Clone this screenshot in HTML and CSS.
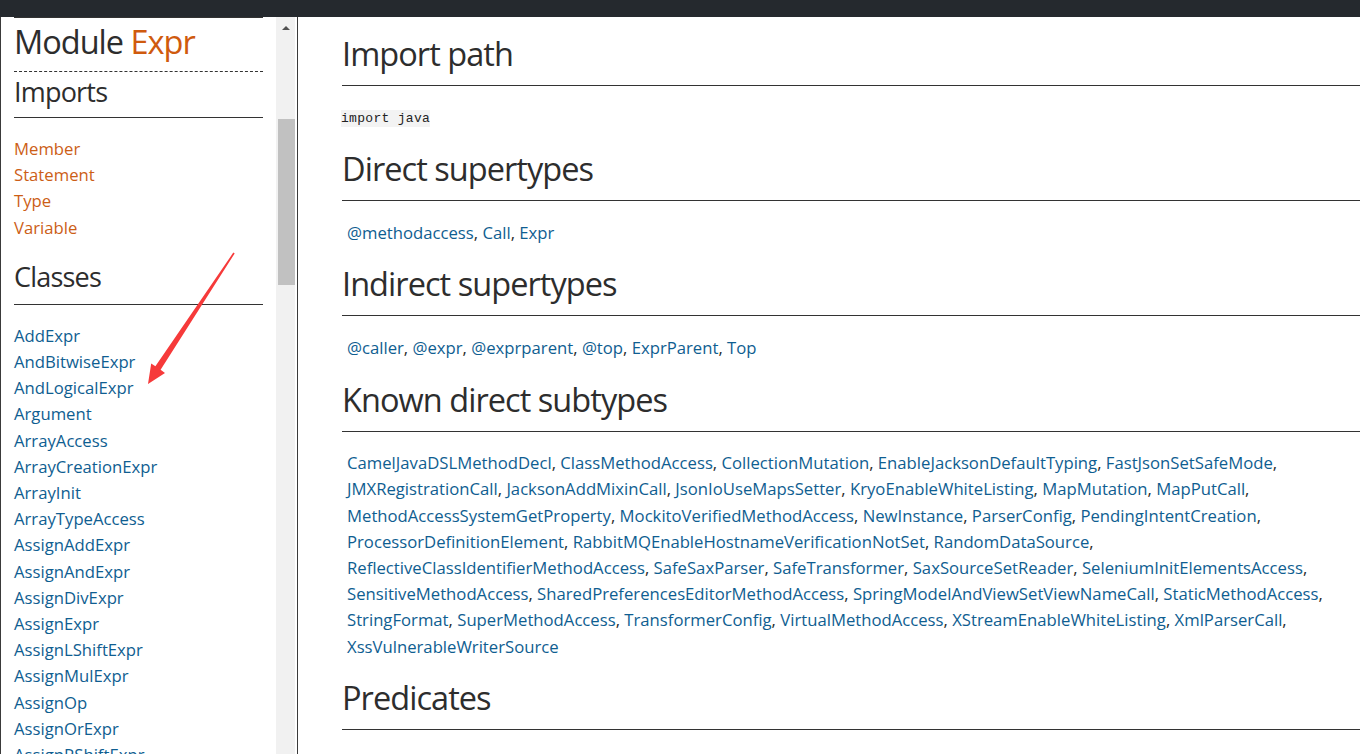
FILE: index.html
```html
<!DOCTYPE html>
<html lang="en">
<head>
<meta charset="utf-8">
<title>Module Expr</title>
<link rel="stylesheet" href="styles.css">
</head>
<body>
<div class="topbar"></div>
<div class="layout">
  <aside class="sidebar">
    <div class="side-content">
      <h1 class="side-title">Module <span class="accent">Expr</span></h1>
      <h2 class="side-h">Imports</h2>
      <ul class="side-list imports">
        <li><a href="#">Member</a></li>
        <li><a href="#">Statement</a></li>
        <li><a href="#">Type</a></li>
        <li><a href="#">Variable</a></li>
      </ul>
      <h2 class="side-h classes-h">Classes</h2>
      <ul class="side-list classes">
        <li><a href="#">AddExpr</a></li>
        <li><a href="#">AndBitwiseExpr</a></li>
        <li><a href="#">AndLogicalExpr</a></li>
        <li><a href="#">Argument</a></li>
        <li><a href="#">ArrayAccess</a></li>
        <li><a href="#">ArrayCreationExpr</a></li>
        <li><a href="#">ArrayInit</a></li>
        <li><a href="#">ArrayTypeAccess</a></li>
        <li><a href="#">AssignAddExpr</a></li>
        <li><a href="#">AssignAndExpr</a></li>
        <li><a href="#">AssignDivExpr</a></li>
        <li><a href="#">AssignExpr</a></li>
        <li><a href="#">AssignLShiftExpr</a></li>
        <li><a href="#">AssignMulExpr</a></li>
        <li><a href="#">AssignOp</a></li>
        <li><a href="#">AssignOrExpr</a></li>
        <li><a href="#">AssignRShiftExpr</a></li>
        <li><a href="#">AssignRemExpr</a></li>
      </ul>
    </div>
    <div class="scrollbar">
      <div class="scroll-up"></div>
      <div class="scroll-track"><div class="scroll-thumb"></div></div>
    </div>
  </aside>
  <main class="main">
    <h2 class="sec-h">Import path</h2>
    <p class="code-line"><code>import java</code></p>
    <h2 class="sec-h">Direct supertypes</h2>
    <p class="links"><a href="#">@methodaccess</a>, <a href="#">Call</a>, <a href="#">Expr</a></p>
    <h2 class="sec-h">Indirect supertypes</h2>
    <p class="links"><a href="#">@caller</a>, <a href="#">@expr</a>, <a href="#">@exprparent</a>, <a href="#">@top</a>, <a href="#">ExprParent</a>, <a href="#">Top</a></p>
    <h2 class="sec-h">Known direct subtypes</h2>
    <p class="links"><a href="#">CamelJavaDSLMethodDecl</a>, <a href="#">ClassMethodAccess</a>, <a href="#">CollectionMutation</a>, <a href="#">EnableJacksonDefaultTyping</a>, <a href="#">FastJsonSetSafeMode</a>,<br><a href="#">JMXRegistrationCall</a>, <a href="#">JacksonAddMixinCall</a>, <a href="#">JsonIoUseMapsSetter</a>, <a href="#">KryoEnableWhiteListing</a>, <a href="#">MapMutation</a>, <a href="#">MapPutCall</a>,<br><a href="#">MethodAccessSystemGetProperty</a>, <a href="#">MockitoVerifiedMethodAccess</a>, <a href="#">NewInstance</a>, <a href="#">ParserConfig</a>, <a href="#">PendingIntentCreation</a>,<br><a href="#">ProcessorDefinitionElement</a>, <a href="#">RabbitMQEnableHostnameVerificationNotSet</a>, <a href="#">RandomDataSource</a>,<br><a href="#">ReflectiveClassIdentifierMethodAccess</a>, <a href="#">SafeSaxParser</a>, <a href="#">SafeTransformer</a>, <a href="#">SaxSourceSetReader</a>, <a href="#">SeleniumInitElementsAccess</a>,<br><a href="#">SensitiveMethodAccess</a>, <a href="#">SharedPreferencesEditorMethodAccess</a>, <a href="#">SpringModelAndViewSetViewNameCall</a>, <a href="#">StaticMethodAccess</a>,<br><a href="#">StringFormat</a>, <a href="#">SuperMethodAccess</a>, <a href="#">TransformerConfig</a>, <a href="#">VirtualMethodAccess</a>, <a href="#">XStreamEnableWhiteListing</a>, <a href="#">XmlParserCall</a>,<br><a href="#">XssVulnerableWriterSource</a></p>
    <h2 class="sec-h">Predicates</h2>
    <p class="plain">Gets the argument expression at the specified index, which is the index of the argument in the call.</p>
  </main>
</div>
<svg class="annotation" width="1360" height="754" viewBox="0 0 1360 754" aria-hidden="true">
  <polygon points="233.3,252.6 234.7,253.4 160.6,369.8 165,373 148,384 151.2,363.4 155.4,366.2" fill="#f63a3a"/>
</svg>
</body>
</html>
```

FILE: styles.css
```css
* { box-sizing: border-box; }
html, body { margin: 0; padding: 0; }
body {
  width: 1360px;
  height: 754px;
  overflow: hidden;
  background: #fff;
  color: #2d2d2d;
  font-family: "Open Sans", "Noto Sans", sans-serif;
  position: relative;
}
a { text-decoration: none; }

.topbar {
  height: 17px;
  background: #25292e;
}

.layout {
  display: flex;
  height: 737px;
}

/* sidebar */
.sidebar {
  width: 298px;
  flex: none;
  display: flex;
  border-left: 1px solid #3a3a3a;
  border-right: 1px solid #3a3a3a;
  overflow: hidden;
}
.side-content {
  width: 249px;
  margin-left: 13px;
  margin-right: 13px;
  border-top: 1px solid #333;
  flex: none;
}
.side-title {
  margin: 4px 0 0;
  font-size: 32.5px;
  line-height: 40px;
  font-weight: 400;
  letter-spacing: -1px;
  padding-bottom: 9px;
  border-bottom: 1px dashed #333;
  color: #2d2d2d;
}
.accent { color: #cf5a0e; }
.side-h {
  margin: 0;
  font-size: 27px;
  line-height: 34px;
  font-weight: 400;
  letter-spacing: -0.8px;
  padding-top: 3px;
  padding-bottom: 8px;
  border-bottom: 1px solid #333;
}
.classes-h { padding-bottom: 10px; }
.side-list {
  list-style: none;
  margin: 18px 0 16px;
  padding: 0;
  font-size: 16.7px;
  line-height: 26.2px;
}
.imports a { color: #cc5e16; }
.classes a { color: #0f5e91; }

.scrollbar {
  width: 19px;
  flex: none;
  background: #f1f1f1;
  display: flex;
  flex-direction: column;
}
.scroll-up {
  height: 17px;
  display: flex;
  align-items: center;
  justify-content: center;
}
.scroll-up::before {
  content: "";
  border-left: 4px solid transparent;
  border-right: 4px solid transparent;
  border-bottom: 4px solid #505050;
  margin-top: 5px;
}
.scroll-track {
  flex: 1;
  padding: 85px 0 0 2px;
}
.scroll-thumb {
  height: 166px;
  width: 17px;
  background: #c1c1c1;
}

/* main */
.main {
  flex: 1;
  padding: 17px 0 0 44px;
  overflow: hidden;
}
.sec-h {
  margin: 0;
  font-size: 32.5px;
  line-height: 40px;
  font-weight: 400;
  letter-spacing: -0.95px;
  padding-bottom: 11px;
  border-bottom: 1px solid #333;
  color: #2d2d2d;
}
.main p {
  margin: 18.5px 0;
  font-size: 16.7px;
  line-height: 26.2px;
}
.code-line code {
  font-family: "Liberation Mono", "DejaVu Sans Mono", monospace;
  font-size: 13px;
  line-height: 1;
  letter-spacing: 0.3px;
  background: #f3f3f3;
  padding: 1px 0;
  color: #222;
  margin-left: -1px;
  vertical-align: 2px;
}
.links { padding-left: 5px; }
.links a { color: #0f5e91; }
.plain { color: #2d2d2d; padding-left: 5px; }

.annotation {
  position: absolute;
  left: 0;
  top: 0;
  pointer-events: none;
}
```
